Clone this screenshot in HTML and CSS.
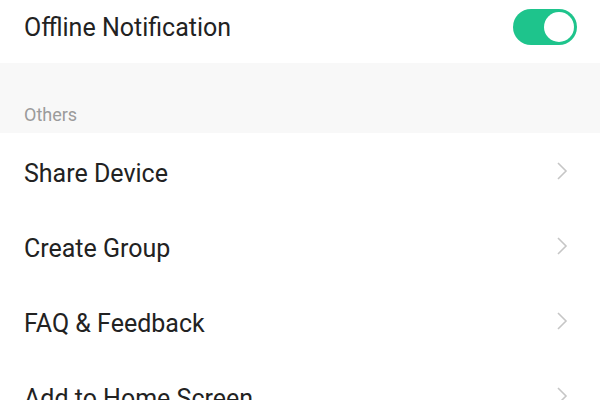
FILE: index.html
```html
<!DOCTYPE html>
<html lang="en">
<head>
    <meta charset="UTF-8">
    <meta name="viewport" content="width=device-width, initial-scale=1.0">
    <title>Device Settings</title>
    <link rel="stylesheet" href="styles.css">
</head>
<body>
    <div class="settings">
        <div class="row row-top">
            <span class="row-label">Offline Notification</span>
            <span class="switch switch-on"><span class="switch-knob"></span></span>
        </div>

        <div class="section-title">Others</div>

        <div class="row">
            <span class="row-label">Share Device</span>
            <svg class="chevron" width="12" height="20" viewBox="0 0 12 20"><path d="M2 2 L10 10 L2 18" /></svg>
        </div>
        <div class="row">
            <span class="row-label">Create Group</span>
            <svg class="chevron" width="12" height="20" viewBox="0 0 12 20"><path d="M2 2 L10 10 L2 18" /></svg>
        </div>
        <div class="row">
            <span class="row-label">FAQ &amp; Feedback</span>
            <svg class="chevron" width="12" height="20" viewBox="0 0 12 20"><path d="M2 2 L10 10 L2 18" /></svg>
        </div>
        <div class="row">
            <span class="row-label">Add to Home Screen</span>
            <svg class="chevron" width="12" height="20" viewBox="0 0 12 20"><path d="M2 2 L10 10 L2 18" /></svg>
        </div>
    </div>
</body>
</html>
```

FILE: styles.css
```css
* {
    margin: 0;
    padding: 0;
    box-sizing: border-box;
}

body {
    font-family: Roboto, "Noto Sans", sans-serif;
    background: #ffffff;
    color: #222222;
    overflow: hidden;
}

.settings {
    width: 600px;
}

.row {
    display: flex;
    justify-content: space-between;
    align-items: center;
    height: 75px;
    padding: 0 23px 0 24px;
    background: #ffffff;
}

.row-top {
    height: 63px;
    padding-bottom: 9px;
}

.row-label {
    font-size: 25px;
    color: #222222;
}

.row .row-label {
    margin-top: 5px;
}

.row-top .row-label {
    margin-top: 0;
}

.section-title {
    display: flex;
    align-items: flex-end;
    height: 70px;
    padding: 0 24px 6px;
    background: #f8f8f8;
    font-size: 18px;
    line-height: 24px;
    color: #9b9b9b;
}

.switch {
    position: relative;
    display: inline-block;
    width: 64px;
    height: 36px;
    border-radius: 18px;
    background: #d8d8d8;
}

.switch-on {
    background: #1ec48c;
}

.switch-knob {
    position: absolute;
    top: 3px;
    right: 3px;
    width: 30px;
    height: 30px;
    border-radius: 50%;
    background: #ffffff;
}

.chevron {
    margin-right: 9px;
}

.chevron path {
    fill: none;
    stroke: #c6c6c6;
    stroke-width: 1.6;
}
```
